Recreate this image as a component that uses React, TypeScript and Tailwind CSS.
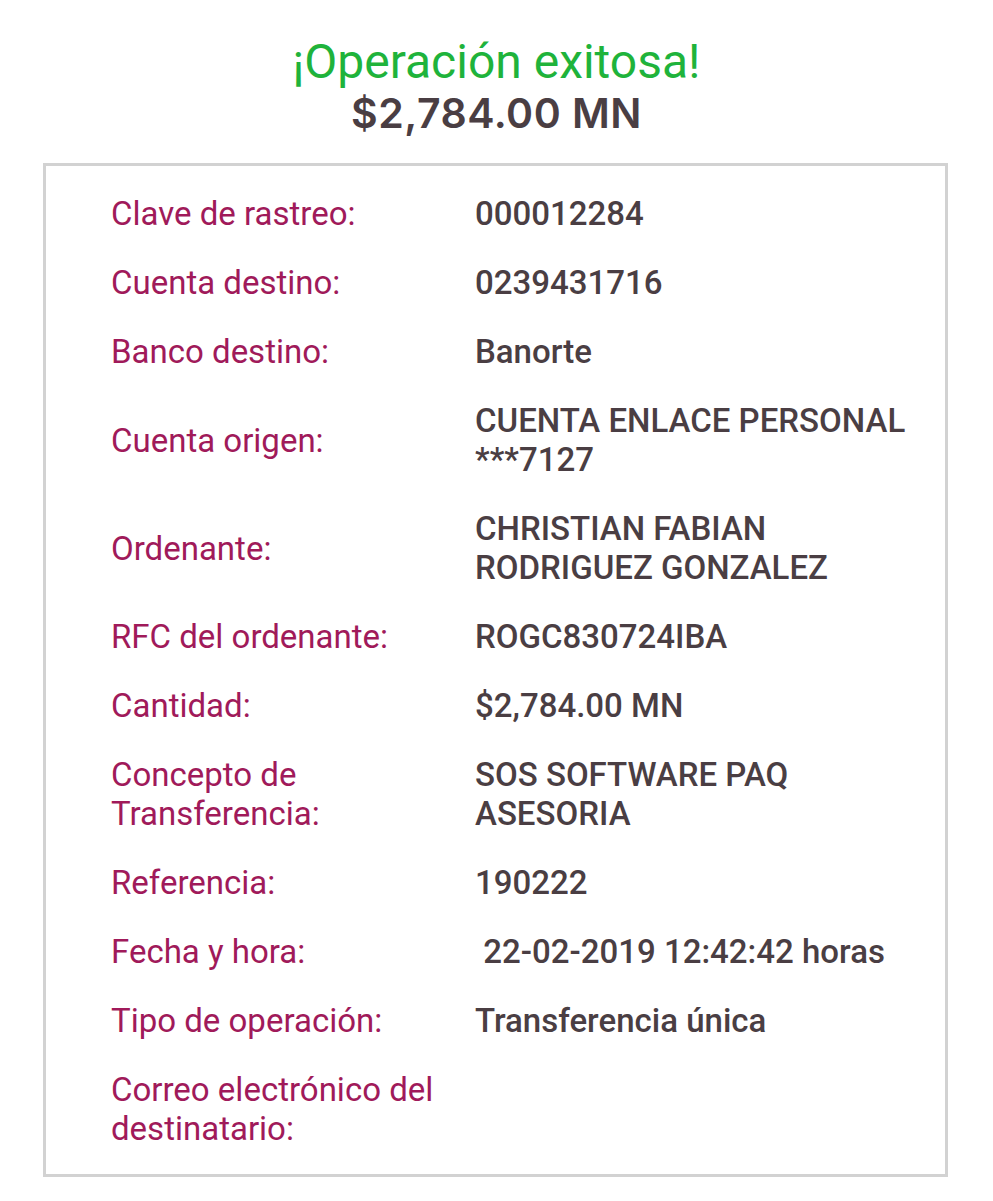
import * as React from "react";

const rows: { label: string; value: string }[] = [
  { label: "Clave de rastreo:", value: "000012284" },
  { label: "Cuenta destino:", value: "0239431716" },
  { label: "Banco destino:", value: "Banorte" },
  { label: "Cuenta origen:", value: "CUENTA ENLACE PERSONAL ***7127" },
  { label: "Ordenante:", value: "CHRISTIAN FABIAN RODRIGUEZ GONZALEZ" },
  { label: "RFC del ordenante:", value: "ROGC830724IBA" },
  { label: "Cantidad:", value: "$2,784.00 MN" },
  { label: "Concepto de Transferencia:", value: "SOS SOFTWARE PAQ ASESORIA" },
  { label: "Referencia:", value: "190222" },
  { label: "Fecha y hora:", value: "\u00a022-02-2019 12:42:42 horas" },
  { label: "Tipo de operación:", value: "Transferencia única" },
  { label: "Correo electrónico del destinatario:", value: "" },
];

export default function App() {
  return (
    <div className="min-h-[1201px] bg-white font-['Roboto',sans-serif]">
      <div className="pt-[34px] text-center">
        <h1 className="text-[48px] leading-[55px] text-[#1fb33b]">¡Operación exitosa!</h1>
        <p className="font-['Inter',sans-serif] font-semibold text-[41px] leading-[48px] tracking-[0.5px] text-[#4a3e43]">
          $2,784.00 MN
        </p>
      </div>

      {/* Detail box */}
      <div className="mt-[26px] ml-[43px] mr-[45px] border-[3px] border-[#d2d2d2] pl-[65px] pr-[20px] pt-[28px] pb-[26px]">
        <div className="flex flex-col gap-[30px]">
          {rows.map((row, i) => (
            <div key={i} className="grid grid-cols-[364px_1fr] items-center text-[33px] leading-[39px]">
              <div className="pr-[24px] text-[#a01a5a]">{row.label}</div>
              <div className="font-medium text-[#4a3e43]">{row.value}</div>
            </div>
          ))}
        </div>
      </div>
    </div>
  );
}
